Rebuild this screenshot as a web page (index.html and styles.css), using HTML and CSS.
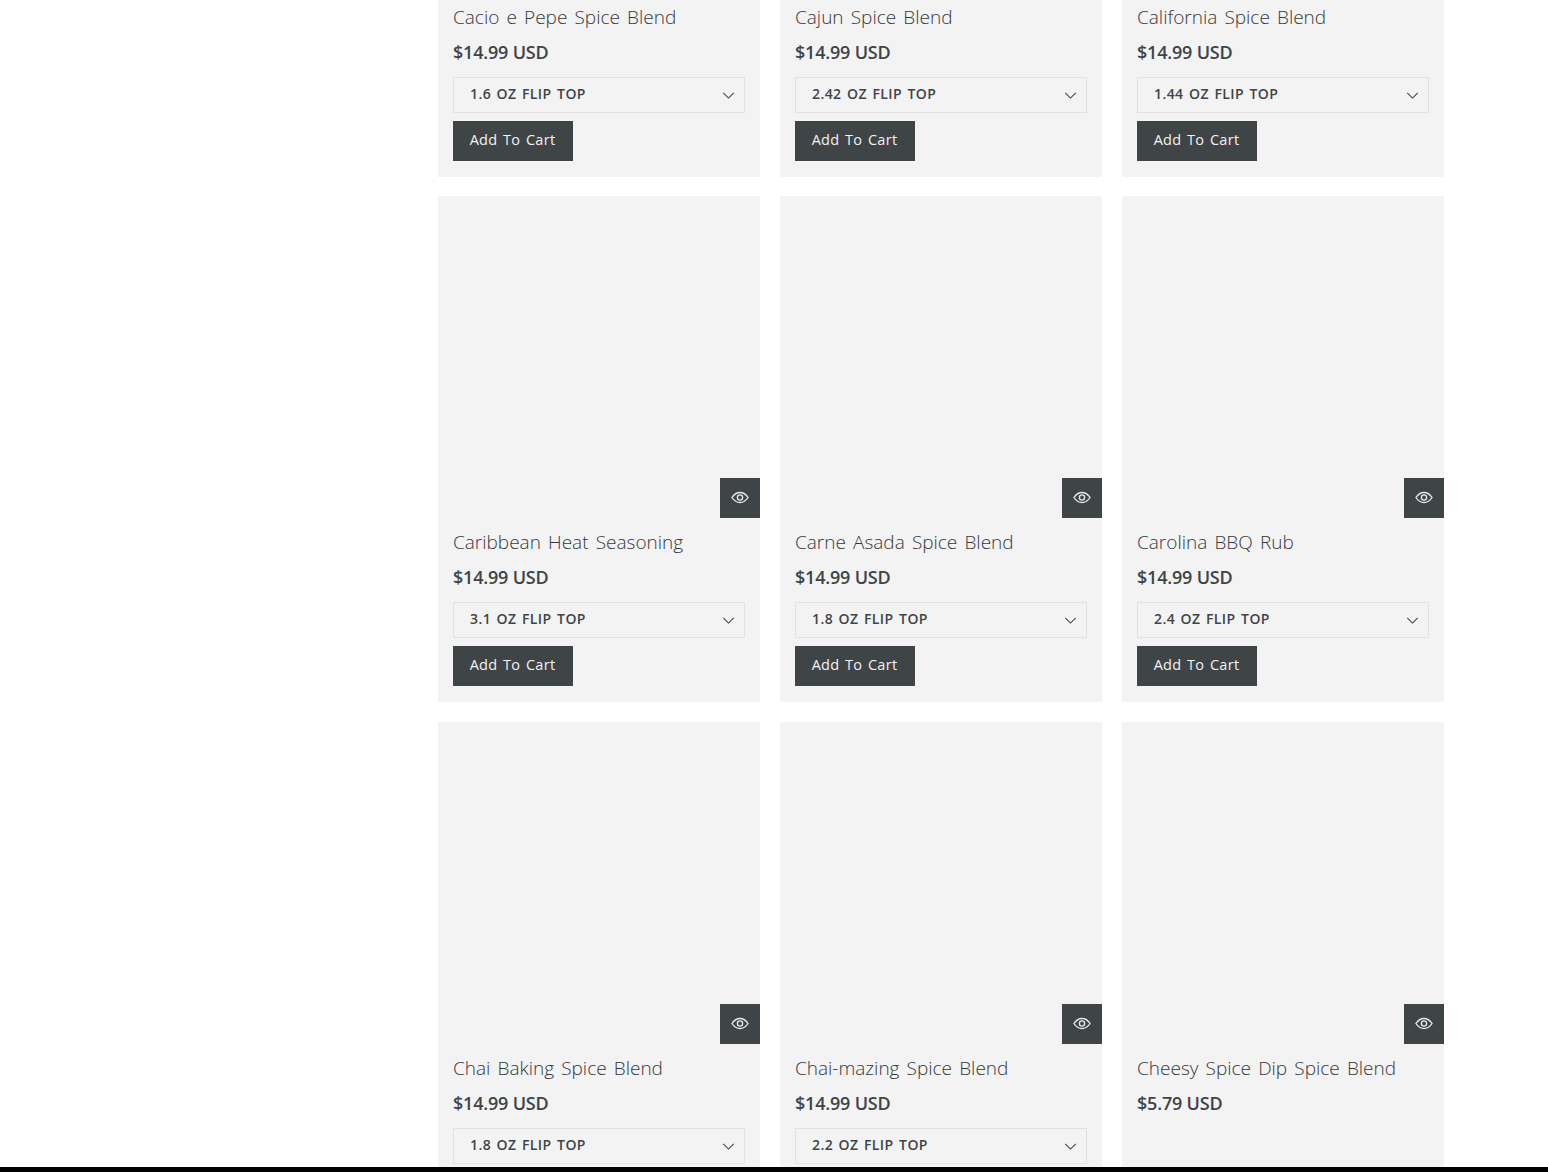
FILE: index.html
```html
<!DOCTYPE html>
<html lang="en">
<head>
<meta charset="utf-8">
<title>Spice Blends</title>
<link rel="stylesheet" href="styles.css">
</head>
<body>
<svg class="sprites" width="0" height="0" aria-hidden="true">
  <symbol id="eye" viewBox="0 0 20 14">
    <path d="M1 7C3.4 3.4 6.4 1.4 10 1.4S16.6 3.4 19 7C16.6 10.6 13.600 12.600 10 12.600S3.400 10.600 1 7Z" fill="none" stroke="currentColor" stroke-width="1.500"/>
    <circle cx="10" cy="7" r="2.900" fill="none" stroke="currentColor" stroke-width="1.500"/>
  </symbol>
  <symbol id="chev" viewBox="0 0 14 8">
    <path d="M1 1L7 7L13 1" fill="none" stroke="currentColor" stroke-width="1.200"/>
  </symbol>
</svg>
<main class="catalog">
  <section class="row row-first">
    <article class="card">
      <div class="info info-cropped"><h3 class="title">Cacio e Pepe Spice Blend</h3><p class="price">$14.99 USD</p>
        <div class="select-wrap"><select class="variant"><option>1.6 OZ FLIP TOP</option></select><svg class="chev"><use href="#chev"/></svg></div>
        <button class="add">Add To Cart</button></div>
    </article>
    <article class="card">
      <div class="info info-cropped"><h3 class="title">Cajun Spice Blend</h3><p class="price">$14.99 USD</p>
        <div class="select-wrap"><select class="variant"><option>2.42 OZ FLIP TOP</option></select><svg class="chev"><use href="#chev"/></svg></div>
        <button class="add">Add To Cart</button></div>
    </article>
    <article class="card">
      <div class="info info-cropped"><h3 class="title">California Spice Blend</h3><p class="price">$14.99 USD</p>
        <div class="select-wrap"><select class="variant"><option>1.44 OZ FLIP TOP</option></select><svg class="chev"><use href="#chev"/></svg></div>
        <button class="add">Add To Cart</button></div>
    </article>
  </section>
  <section class="row">
    <article class="card">
      <div class="media"><button class="quick" aria-label="Quick view"><svg class="eye"><use href="#eye"/></svg></button></div>
      <div class="info"><h3 class="title">Caribbean Heat Seasoning</h3><p class="price">$14.99 USD</p>
        <div class="select-wrap"><select class="variant"><option>3.1 OZ FLIP TOP</option></select><svg class="chev"><use href="#chev"/></svg></div>
        <button class="add">Add To Cart</button></div>
    </article>
    <article class="card">
      <div class="media"><button class="quick" aria-label="Quick view"><svg class="eye"><use href="#eye"/></svg></button></div>
      <div class="info"><h3 class="title">Carne Asada Spice Blend</h3><p class="price">$14.99 USD</p>
        <div class="select-wrap"><select class="variant"><option>1.8 OZ FLIP TOP</option></select><svg class="chev"><use href="#chev"/></svg></div>
        <button class="add">Add To Cart</button></div>
    </article>
    <article class="card">
      <div class="media"><button class="quick" aria-label="Quick view"><svg class="eye"><use href="#eye"/></svg></button></div>
      <div class="info"><h3 class="title">Carolina BBQ Rub</h3><p class="price">$14.99 USD</p>
        <div class="select-wrap"><select class="variant"><option>2.4 OZ FLIP TOP</option></select><svg class="chev"><use href="#chev"/></svg></div>
        <button class="add">Add To Cart</button></div>
    </article>
  </section>
  <section class="row">
    <article class="card">
      <div class="media"><button class="quick" aria-label="Quick view"><svg class="eye"><use href="#eye"/></svg></button></div>
      <div class="info"><h3 class="title">Chai Baking Spice Blend</h3><p class="price">$14.99 USD</p>
        <div class="select-wrap"><select class="variant"><option>1.8 OZ FLIP TOP</option></select><svg class="chev"><use href="#chev"/></svg></div></div>
    </article>
    <article class="card">
      <div class="media"><button class="quick" aria-label="Quick view"><svg class="eye"><use href="#eye"/></svg></button></div>
      <div class="info"><h3 class="title">Chai-mazing Spice Blend</h3><p class="price">$14.99 USD</p>
        <div class="select-wrap"><select class="variant"><option>2.2 OZ FLIP TOP</option></select><svg class="chev"><use href="#chev"/></svg></div></div>
    </article>
    <article class="card">
      <div class="media"><button class="quick" aria-label="Quick view"><svg class="eye"><use href="#eye"/></svg></button></div>
      <div class="info"><h3 class="title">Cheesy Spice Dip Spice Blend</h3><p class="price">$5.79 USD</p></div>
    </article>
  </section>
</main>
<div class="bottom-bar"></div>
</body>
</html>
```
FILE: styles.css
```css
* { box-sizing: border-box; }
html, body { margin: 0; height: 1172px; overflow: hidden; background: #fff; }
body { font-family: "Open Sans", "Liberation Sans", sans-serif; color: #3f4447; }
.sprites { position: absolute; }
.catalog { padding-left: 438px; width: 1444px; display: flex; flex-direction: column; gap: 20px; }
.row { display: grid; grid-template-columns: repeat(3, 322px); column-gap: 20px; }
.row-first { margin-bottom: -1px; }
.card { background: #f3f3f3; min-height: 177px; }
.media { height: 322px; position: relative; }
.quick { position: absolute; right: 0; bottom: 0; width: 40px; height: 40px; border: 0; padding: 0 1px 1px 0; background: #3f4447; color: #e8e8e8; display: flex; align-items: center; justify-content: center; }
.eye { width: 18px; height: 13px; }
.info { padding: 9px 15px 16px; }
.info-cropped { padding-top: 2px; }
.title { margin: 0; font-size: 19px; line-height: 30px; font-weight: 300; word-spacing: 2.2px; color: #33383b; }
.price { margin: 7px 0 0; font-size: 18px; line-height: 26px; height: 38px; font-weight: 600; letter-spacing: -0.2px; color: #3f4447; }
.select-wrap { position: relative; height: 36px; }
.variant { appearance: none; display: block; width: 100%; height: 36px; padding: 0 36px 3px 16px; border: 1px solid #e2e2e2; border-radius: 0; background: #f3f3f3; font-family: inherit; font-size: 14px; font-weight: 600; letter-spacing: 0.4px; word-spacing: 1.5px; color: #3f4447; }
.chev { position: absolute; right: 10px; top: 15px; width: 13px; height: 7px; color: #3f4447; }
.add { display: block; margin-top: 8px; width: 120px; height: 40px; padding: 0 1px 3px 0; border: 0; background: #3f4447; color: #f2f2f2; font-family: inherit; font-size: 14.5px; font-weight: 400; letter-spacing: 0.3px; word-spacing: 1.5px; }
.bottom-bar { position: fixed; left: 0; right: 0; bottom: 0; height: 5px; background: #000; }
```
